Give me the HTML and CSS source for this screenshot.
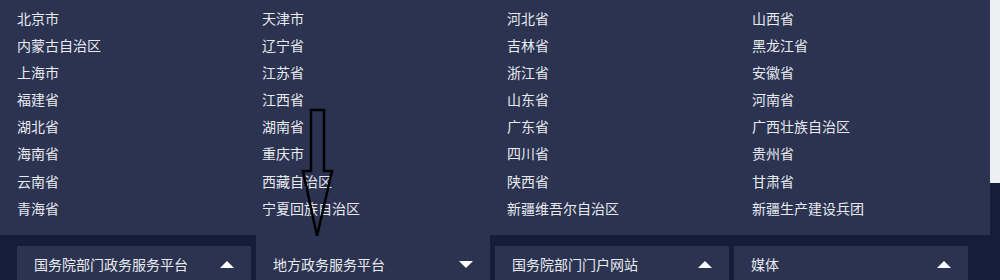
FILE: index.html
```html
<!DOCTYPE html>
<html lang="zh-CN">
<head>
    <meta charset="UTF-8">
    <title>政务服务平台</title>
    <link rel="stylesheet" href="styles.css">
</head>
<body>
    <div class="page">
        <div class="content">
            <!-- 地方政务服务平台 列表 -->
            <div class="panel">
                <a>北京市</a><a>天津市</a><a>河北省</a><a>山西省</a>
                <a>内蒙古自治区</a><a>辽宁省</a><a>吉林省</a><a>黑龙江省</a>
                <a>上海市</a><a>江苏省</a><a>浙江省</a><a>安徽省</a>
                <a>福建省</a><a>江西省</a><a>山东省</a><a>河南省</a>
                <a>湖北省</a><a>湖南省</a><a>广东省</a><a>广西壮族自治区</a>
                <a>海南省</a><a>重庆市</a><a>四川省</a><a>贵州省</a>
                <a>云南省</a><a>西藏自治区</a><a>陕西省</a><a>甘肃省</a>
                <a>青海省</a><a>宁夏回族自治区</a><a>新疆维吾尔自治区</a><a>新疆生产建设兵团</a>
            </div>

            <!-- 底部标签 -->
            <div class="tabs">
                <div class="tab"><span>国务院部门政务服务平台</span><i class="caret up"></i></div>
                <div class="tab active"><span>地方政务服务平台</span><i class="caret down"></i></div>
                <div class="tab"><span>国务院部门门户网站</span><i class="caret up"></i></div>
                <div class="tab"><span>媒体</span><i class="caret up"></i></div>
            </div>
        </div>
        <div class="scrollbar"></div>

        <svg class="arrow" width="40" height="135" viewBox="300 106 40 135">
            <polygon points="311,110 324,110 324,171 332,171 317,236 303,171 311,171"
                     fill="none" stroke="#000" stroke-width="2.5" stroke-linejoin="miter"/>
        </svg>
    </div>
</body>
</html>
```

FILE: styles.css
```css
body {
    margin: 0;
    background-color: #151d3d;
    font-family: "Noto Sans CJK SC", "Microsoft YaHei", sans-serif;
    color: #e8eaf0;
    overflow: hidden;
}

.page {
    position: relative;
    display: flex;
    width: 1000px;
    height: 280px;
}

.content {
    width: 990px;
}

/* Province list */
.panel {
    display: grid;
    grid-template-columns: repeat(4, 245px);
    align-content: start;
    height: 235px;
    box-sizing: border-box;
    padding: 5px 0 0 17px;
    background-color: #2b3350;
}

.panel a {
    font-size: 14px;
    line-height: 27.1px;
    white-space: nowrap;
    cursor: pointer;
}

/* Tabs */
.tabs {
    display: flex;
    align-items: flex-start;
    gap: 5px;
    padding-left: 17px;
    height: 45px;
}

.tab {
    display: flex;
    align-items: center;
    justify-content: space-between;
    width: 234px;
    height: 36px;
    margin-top: 11px;
    box-sizing: border-box;
    padding: 0 17px;
    background-color: #2b3350;
    font-size: 14px;
}

.tab.active {
    height: 47px;
    margin-top: 0;
    padding-top: 11px;
}

.caret {
    width: 0;
    height: 0;
    border-left: 7px solid transparent;
    border-right: 7px solid transparent;
}

.caret.up {
    border-bottom: 7px solid #ffffff;
}

.caret.down {
    border-top: 7px solid #ffffff;
}

.scrollbar {
    width: 10px;
    height: 183px;
    background-color: #eeeff2;
}

/* annotation arrow */
.arrow {
    position: absolute;
    left: 300px;
    top: 106px;
}
```
